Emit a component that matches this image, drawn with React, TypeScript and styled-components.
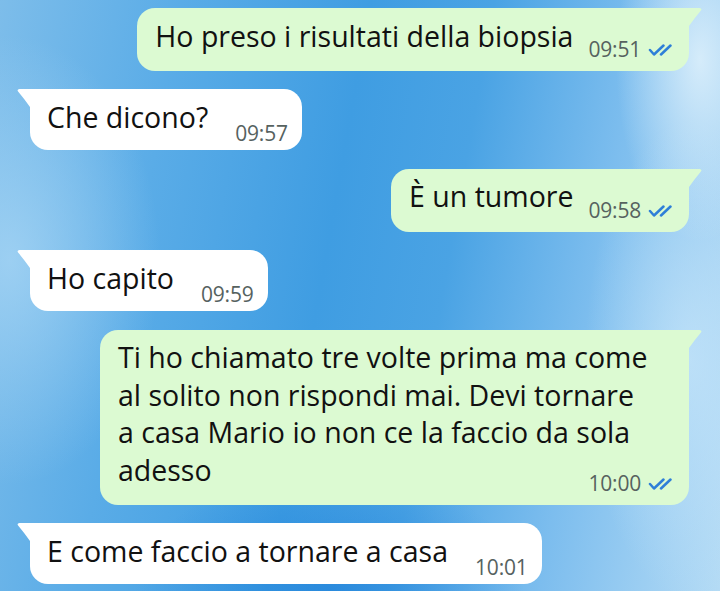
import styled, { createGlobalStyle } from "styled-components";

const GlobalStyle = createGlobalStyle`
  html, body {
    margin: 0;
    padding: 0;
  }

  body {
    font-family: "Open Sans", "Noto Sans", sans-serif;
  }
`;

type Message = {
  out: boolean;
  lines: string[];
  time: string;
  // width of the text block when the message runs over several lines
  width?: number;
};

const messages: Message[] = [
  { out: true, lines: ["Ho preso i risultati della biopsia"], time: "09:51" },
  { out: false, lines: ["Che dicono?"], time: "09:57" },
  { out: true, lines: ["È un tumore"], time: "09:58" },
  { out: false, lines: ["Ho capito"], time: "09:59" },
  {
    out: true,
    lines: [
      "Ti ho chiamato tre volte prima ma come",
      "al solito non rispondi mai. Devi tornare",
      "a casa Mario io non ce la faccio da sola",
      "adesso",
    ],
    time: "10:00",
    width: 545,
  },
  { out: false, lines: ["E come faccio a tornare a casa"], time: "10:01" },
];

const Screen = styled.div`
  width: 720px;
  height: 591px;
  overflow: hidden;
  box-sizing: border-box;
  display: flex;
  flex-direction: column;
  gap: 18.4px;
  padding: 8px 18px 0 17px;
  background:
    radial-gradient(ellipse 120px 260px at 700px 60px, rgba(225, 242, 252, 0.85), transparent 70%),
    radial-gradient(ellipse 140px 320px at 690px 360px, rgba(200, 230, 250, 0.7), transparent 75%),
    radial-gradient(ellipse 260px 160px at 330px 590px, rgba(20, 120, 215, 0.55), transparent 75%),
    radial-gradient(ellipse 200px 300px at 10px 260px, rgba(170, 215, 245, 0.75), transparent 75%),
    linear-gradient(100deg, #7dbdea 0%, #5aace7 22%, #3f9de2 45%, #4aa3e4 60%, #7cbdee 78%, #b4dbf5 100%);
`;

const Row = styled.div<{ $out: boolean }>`
  display: flex;
  justify-content: ${(p) => (p.$out ? "flex-end" : "flex-start")};
`;

const Bubble = styled.div<{ $out: boolean; $multi: boolean }>`
  position: relative;
  display: ${(p) => (p.$multi ? "grid" : "flex")};
  align-items: flex-end;
  gap: ${(p) => (p.$out ? "15px" : "27px")};
  margin: ${(p) => (p.$out ? "0 13px 0 0" : "0 0 0 13px")};
  padding: ${(p) => (p.$out ? "9.5px 14px 10px 18px" : "9.5px 14px 5.5px 17px")};
  background: ${(p) => (p.$out ? "#dcfad2" : "#ffffff")};
  border-radius: ${(p) => (p.$out ? "18px 0 18px 18px" : "0 18px 18px 18px")};
  color: #111111;
`;

const Tail = styled.svg<{ $out: boolean }>`
  position: absolute;
  top: 0;
  ${(p) => (p.$out ? "right: -13px;" : "left: -13px; transform: scaleX(-1);")}
  width: 13px;
  height: 18px;
  fill: ${(p) => (p.$out ? "#dcfad2" : "#ffffff")};
`;

const Text = styled.div<{ $out: boolean; $width?: number }>`
  grid-area: 1 / 1;
  font-size: 28.5px;
  line-height: 37.5px;
  white-space: nowrap;
  margin-bottom: ${(p) => (p.$out ? "6px" : "8.5px")};
  ${(p) => (p.$width ? `width: ${p.$width}px; margin-right: 12px;` : "")}
`;

const Meta = styled.div`
  grid-area: 1 / 1;
  justify-self: end;
  align-self: end;
  display: flex;
  align-items: center;
  gap: 7px;
`;

const Time = styled.span`
  font-size: 21px;
  line-height: 24px;
  letter-spacing: -0.2px;
  color: #56625f;
`;

const Ticks = styled.svg`
  width: 27px;
  height: 12px;
  margin-top: 2px;
  fill: none;
  stroke: #2e7fd8;
  stroke-width: 2.5;
  stroke-linecap: round;
  stroke-linejoin: round;
`;

const ChatBubble = ({ m }: { m: Message }) => {
  const multi = m.lines.length > 1;
  return (
    <Row $out={m.out}>
      <Bubble $out={m.out} $multi={multi}>
        <Tail $out={m.out} viewBox="0 0 13 18">
          <path d="M0 0 H10.5 Q13.6 0.3 11.7 2.8 Q6 9.6 0 18 Z" />
        </Tail>
        <Text $out={m.out} $width={m.width}>
          {m.lines.map((l, i) => (
            <div key={i}>{l}</div>
          ))}
        </Text>
        <Meta>
          <Time>{m.time}</Time>
          {m.out && (
            <Ticks viewBox="0 0 27 12">
              <path d="M2 6 L6 10.5 L15.5 1.5" />
              <path d="M13 10.5 L22.5 1.5" />
            </Ticks>
          )}
        </Meta>
      </Bubble>
    </Row>
  );
};

export default function App() {
  return (
    <>
      <GlobalStyle />
      <Screen>
        {messages.map((m, i) => (
          <ChatBubble key={i} m={m} />
        ))}
      </Screen>
    </>
  );
}
